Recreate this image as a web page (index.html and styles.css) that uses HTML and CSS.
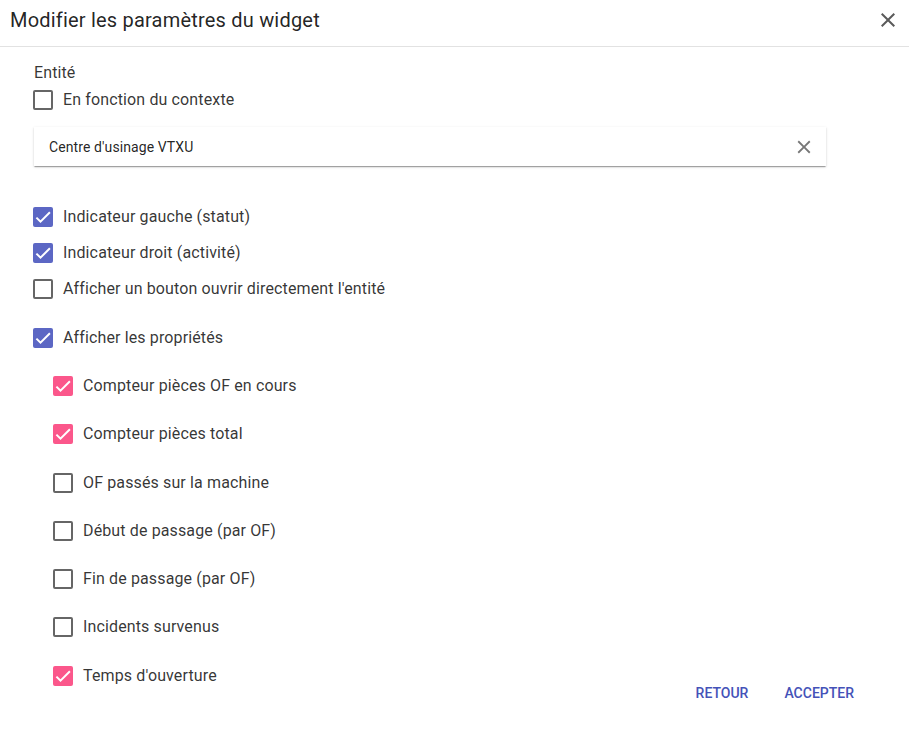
FILE: index.html
```html
<!DOCTYPE html>
<html lang="fr">
<head>
<meta charset="utf-8">
<title>Modifier les paramètres du widget</title>
<link rel="stylesheet" href="styles.css">
</head>
<body>
<div class="dialog">
  <header class="dlg-header">
    <h1 class="dlg-title">Modifier les paramètres du widget</h1>
    <button class="icon-btn close-btn" aria-label="Fermer">
      <svg viewBox="0 0 24 24" width="24" height="24"><path d="M19 6.41L17.59 5 12 10.59 6.41 5 5 6.41 10.59 12 5 17.59 6.41 19 12 13.41 17.59 19 19 17.59 13.41 12z"/></svg>
    </button>
  </header>

  <div class="dlg-body">
    <div class="settings">
      <div class="field-label">Entité</div>
      <label class="cb-row cb-compact">
        <span class="cb"></span><span class="cb-text">En fonction du contexte</span>
      </label>

      <div class="entity-card">
        <span class="entity-name">Centre d'usinage VTXU</span>
        <button class="icon-btn clear-btn" aria-label="Effacer">
          <svg viewBox="0 0 24 24" width="22" height="22"><path d="M19 6.41L17.59 5 12 10.59 6.41 5 5 6.41 10.59 12 5 17.59 6.41 19 12 13.41 17.59 19 19 17.59 13.41 12z"/></svg>
        </button>
      </div>

      <div class="group">
        <label class="cb-row">
          <span class="cb checked primary"><svg viewBox="0 0 24 24"><path d="M4.1 12.7 9 17.6 20.3 6.3"/></svg></span><span class="cb-text">Indicateur gauche (statut)</span>
        </label>
        <label class="cb-row">
          <span class="cb checked primary"><svg viewBox="0 0 24 24"><path d="M4.1 12.7 9 17.6 20.3 6.3"/></svg></span><span class="cb-text">Indicateur droit (activité)</span>
        </label>
        <label class="cb-row">
          <span class="cb"></span><span class="cb-text">Afficher un bouton ouvrir directement l'entité</span>
        </label>
        <label class="cb-row cb-props">
          <span class="cb checked primary"><svg viewBox="0 0 24 24"><path d="M4.1 12.7 9 17.6 20.3 6.3"/></svg></span><span class="cb-text">Afficher les propriétés</span>
        </label>
      </div>

      <div class="props">
        <label class="cb-row cb-tall">
          <span class="cb checked accent"><svg viewBox="0 0 24 24"><path d="M4.1 12.7 9 17.6 20.3 6.3"/></svg></span><span class="cb-text">Compteur pièces OF en cours</span>
        </label>
        <label class="cb-row cb-tall">
          <span class="cb checked accent"><svg viewBox="0 0 24 24"><path d="M4.1 12.7 9 17.6 20.3 6.3"/></svg></span><span class="cb-text">Compteur pièces total</span>
        </label>
        <label class="cb-row cb-tall">
          <span class="cb"></span><span class="cb-text">OF passés sur la machine</span>
        </label>
        <label class="cb-row cb-tall">
          <span class="cb"></span><span class="cb-text">Début de passage (par OF)</span>
        </label>
        <label class="cb-row cb-tall">
          <span class="cb"></span><span class="cb-text">Fin de passage (par OF)</span>
        </label>
        <label class="cb-row cb-tall">
          <span class="cb"></span><span class="cb-text">Incidents survenus</span>
        </label>
        <label class="cb-row cb-tall">
          <span class="cb checked accent"><svg viewBox="0 0 24 24"><path d="M4.1 12.7 9 17.6 20.3 6.3"/></svg></span><span class="cb-text">Temps d'ouverture</span>
        </label>
      </div>
    </div>

    <div class="actions">
      <button class="text-btn">RETOUR</button>
      <button class="text-btn">ACCEPTER</button>
    </div>
  </div>
</div>
</body>
</html>
```

FILE: styles.css
```css
* { box-sizing: border-box; }

html, body {
  margin: 0;
  padding: 0;
  background: #ffffff;
}

body {
  font-family: Roboto, "Liberation Sans", Arial, sans-serif;
  color: rgba(0, 0, 0, 0.87);
}

.dialog {
  width: 909px;
  height: 735px;
  background: #fff;
}

.dlg-header {
  height: 47px;
  border-bottom: 1px solid #e2e2e2;
  display: flex;
  align-items: center;
  justify-content: space-between;
  padding: 0 9px 0 10px;
}

.dlg-title {
  margin: 0;
  font-size: 20px;
  font-weight: 400;
  line-height: 24px;
  letter-spacing: 0.2px;
  color: rgba(0, 0, 0, 0.87);
  margin-top: -6px;
}

.icon-btn {
  border: 0;
  background: transparent;
  padding: 0;
  margin: 0;
  display: flex;
  align-items: center;
  justify-content: center;
  cursor: pointer;
}

.close-btn {
  width: 24px;
  height: 24px;
  margin-top: -6px;
}
.close-btn svg { fill: #5a5a5a; }

.dlg-body {
  display: flex;
  align-items: flex-end;
}

.settings {
  flex: 1 1 auto;
  min-width: 0;
  padding: 16px 0 11px 34px;
}

.field-label {
  font-size: 16px;
  line-height: 20px;
  letter-spacing: 0.1px;
  color: rgba(0, 0, 0, 0.8);
}

.cb-row {
  display: flex;
  align-items: center;
  height: 36px;
  cursor: pointer;
}

.cb-compact {
  height: 24px;
  margin-top: 5px;
}

.cb {
  width: 20px;
  height: 20px;
  flex: 0 0 20px;
  border: 2px solid rgba(0, 0, 0, 0.6);
  border-radius: 2px;
  margin-left: -1px;
  margin-right: 10px;
  display: flex;
  align-items: center;
  justify-content: center;
}

.cb.checked { border: 0; }
.cb.primary { background: #5c67c4; }
.cb.accent { background: #fb578b; }

.cb svg {
  width: 20px;
  height: 20px;
  fill: none;
  stroke: #fff;
  stroke-width: 2.4;
}

.cb-text {
  font-size: 16px;
  line-height: 20px;
  letter-spacing: 0.13px;
  color: rgba(0, 0, 0, 0.8);
  white-space: nowrap;
}

.entity-card {
  margin-top: 15px;
  width: 792px;
  height: 39px;
  display: flex;
  align-items: center;
  justify-content: space-between;
  padding: 0 11px 0 15px;
  background: #fff;
  box-shadow: 0 2px 1px -1px rgba(0, 0, 0, 0.2), 0 1px 1px 0 rgba(0, 0, 0, 0.14), 0 1px 3px 0 rgba(0, 0, 0, 0.12);
}

.entity-name {
  font-size: 14px;
  letter-spacing: 0.1px;
  color: rgba(0, 0, 0, 0.87);
}

.clear-btn { width: 22px; height: 22px; }
.clear-btn svg { fill: #777; }

.group {
  margin-top: 33px;
}

.cb-props {
  margin-top: 13px;
}

.props {
  padding-left: 20px;
  margin-top: 6px;
}

.cb-tall {
  height: 48px;
  margin-top: 0.3px;
}

.actions {
  flex: 0 0 auto;
  display: flex;
  gap: 4px;
  padding-right: 39px;
}

.text-btn {
  border: 0;
  background: transparent;
  height: 36px;
  padding: 0 16px;
  font-family: Roboto, "Liberation Sans", Arial, sans-serif;
  font-size: 14px;
  font-weight: 500;
  color: #4452b8;
  cursor: pointer;
  border-radius: 4px;
}
```
